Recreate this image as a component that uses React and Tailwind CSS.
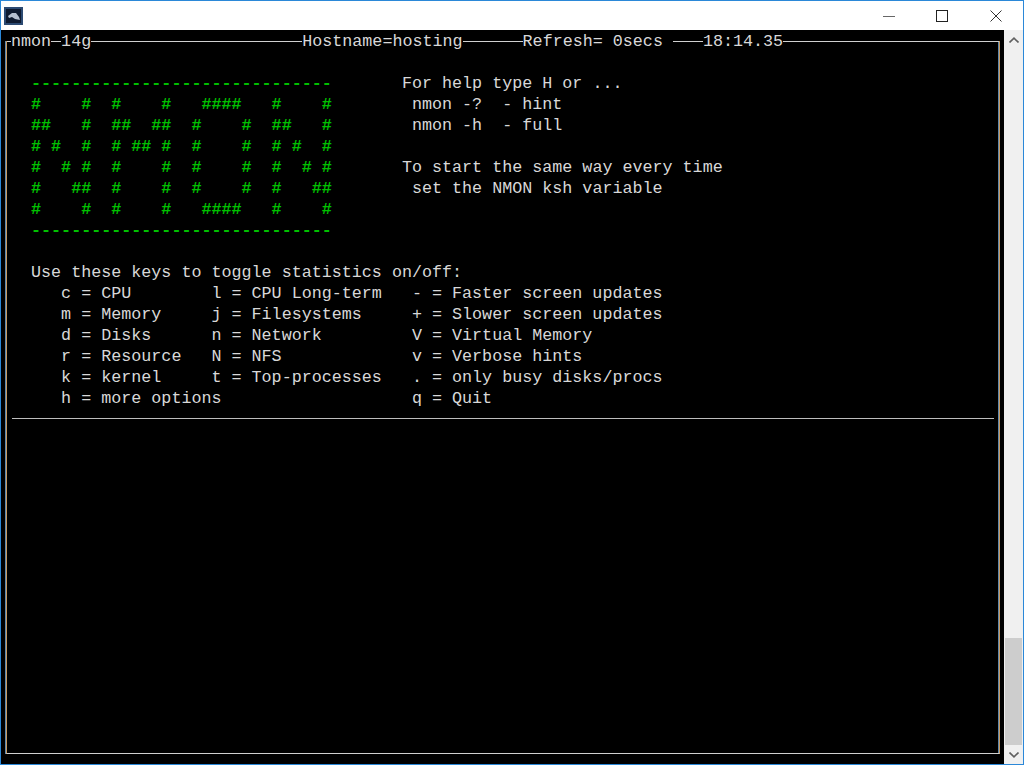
const helpRows = [
  { text: " " },
  { text: "  ------------------------------       For help type H or ...", logo: 32 },
  { text: "  #    #  #    #   ####   #    #        nmon -?  - hint", logo: 32 },
  { text: "  ##   #  ##  ##  #    #  ##   #        nmon -h  - full", logo: 32 },
  { text: "  # #  #  # ## #  #    #  # #  #", logo: 32 },
  { text: "  #  # #  #    #  #    #  #  # #       To start the same way every time", logo: 32 },
  { text: "  #   ##  #    #  #    #  #   ##        set the NMON ksh variable", logo: 32 },
  { text: "  #    #  #    #   ####   #    #", logo: 32 },
  { text: "  ------------------------------", logo: 32 },
  { text: " " },
  { text: "  Use these keys to toggle statistics on/off:" },
  { text: "     c = CPU        l = CPU Long-term   - = Faster screen updates" },
  { text: "     m = Memory     j = Filesystems     + = Slower screen updates" },
  { text: "     d = Disks      n = Network         V = Virtual Memory" },
  { text: "     r = Resource   N = NFS             v = Verbose hints" },
  { text: "     k = kernel     t = Top-processes   . = only busy disks/procs" },
  { text: "     h = more options                   q = Quit" },
];

function HelpRow({ row }) {
  if (!row.logo) return <div className="h-[21px]">{row.text}</div>;
  return (
    <div className="h-[21px]">
      <span className="text-[#00c000] font-bold">{row.text.slice(0, row.logo)}</span>
      {row.text.slice(row.logo)}
    </div>
  );
}

export default function App() {
  return (
    <div className="w-[1024px] h-[765px] overflow-hidden flex flex-col bg-white border border-[#2b88d8]">
      {/* title bar */}
      <div className="h-[29px] flex items-center shrink-0">
        <svg width="19" height="18" viewBox="0 0 19 18" className="ml-[3px] mt-[1px]">
          <rect x="0" y="0" width="19" height="18" fill="#2c4a72" />
          <rect x="2" y="2" width="15" height="14" fill="#0e1a30" />
          <path d="M4 9 L8 6 L12 6 L15 10 L16 13 L11 12 L8 10 L5 11 Z" fill="#b4bfd0" />
        </svg>
        <div className="flex-1" />
        <svg width="12" height="12" viewBox="0 0 12 12" className="mr-[41px]">
          <path d="M0 6.5 H12" stroke="#666" strokeWidth="1" />
        </svg>
        <svg width="12" height="12" viewBox="0 0 12 12" className="mr-[42px]">
          <rect x="0.5" y="0.5" width="11" height="11" fill="none" stroke="#222" strokeWidth="1" />
        </svg>
        <svg width="12" height="12" viewBox="0 0 12 12" className="mr-[21px]">
          <path d="M0.5 0.5 L11.5 11.5 M11.5 0.5 L0.5 11.5" stroke="#333" strokeWidth="1" />
        </svg>
      </div>

      <div className="flex-1 flex min-h-0">
        {/* terminal */}
        <div className="flex-1 bg-black pl-[5px] pr-[4px] pt-[11px] pb-[10px] min-w-0">
          <div className="relative h-full border-l border-r border-b border-l-[#c89a60] border-r-[#c89a60] border-b-[#d0d0d0] shadow-[-1px_0_0_#5f88ad,inset_-1px_0_0_#5f88ad] font-['Liberation_Mono',monospace] text-[16.72px] leading-[21px] whitespace-pre text-[#d8d8d8]">
            <div className="absolute left-0 right-0 top-[-10px] h-[21px] flex items-center">
              <span className="w-[4px] h-px bg-[#d0d0d0]" />
              <span>nmon</span>
              <span className="w-[10px] h-px bg-[#d0d0d0]" />
              <span>14g</span>
              <span className="w-[211px] h-px bg-[#d0d0d0]" />
              <span>Hostname=hosting</span>
              <span className="w-[60px] h-px bg-[#d0d0d0]" />
              <span>Refresh= 0secs</span>
              <span className="w-[10px]" />
              <span className="w-[30px] h-px bg-[#d0d0d0]" />
              <span>18:14.35</span>
              <span className="flex-1 h-px bg-[#d0d0d0]" />
            </div>
            <div className="pt-[11px] pl-[4px]">
              {helpRows.map((row, i) => (
                <HelpRow key={i} row={row} />
              ))}
              <div className="h-px bg-[#bdbdbd] mt-[9px] ml-[1px] mr-[5px]" />
            </div>
          </div>
        </div>
        {/* scrollbar */}
        <div className="w-[19px] shrink-0 bg-[#f0f0f0] flex flex-col items-center">
          <div className="h-[20px] flex items-center justify-center shrink-0">
            <svg width="10" height="6" viewBox="0 0 10 6">
              <path d="M0.5 5.5 L5 1.2 L9.5 5.5" fill="none" stroke="#606060" strokeWidth="1.6" />
            </svg>
          </div>
          <div className="flex-1" />
          <div className="w-[17px] h-[107px] bg-[#cdcdcd] shrink-0" />
          <div className="h-[19px] flex items-center justify-center shrink-0">
            <svg width="10" height="6" viewBox="0 0 10 6">
              <path d="M0.5 0.5 L5 4.8 L9.5 0.5" fill="none" stroke="#606060" strokeWidth="1.6" />
            </svg>
          </div>
        </div>
      </div>
    </div>
  );
}
